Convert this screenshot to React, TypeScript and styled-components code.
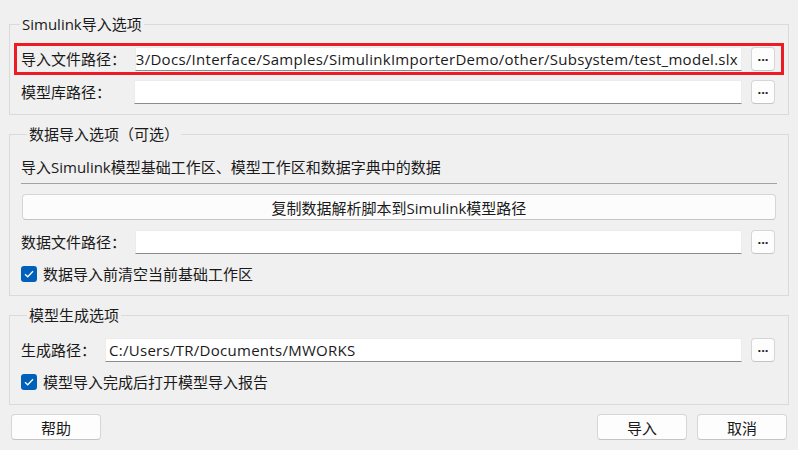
import React from "react";
import styled, { createGlobalStyle } from "styled-components";

const GlobalStyle = createGlobalStyle`
  html, body {
    margin: 0;
    padding: 0;
    background: #f0f0f0;
  }
  body {
    font-family: "Open Sans", "Noto Sans CJK SC", sans-serif;
    font-size: 15px;
    color: #1a1a1a;
  }
  * {
    box-sizing: border-box;
  }
`;

const Page = styled.div`
  width: 798px;
  height: 450px;
  padding: 14px 9px 0;
  display: flex;
  flex-direction: column;
  gap: 9px;
`;

const Group = styled.fieldset<{ $pad: string }>`
  margin: 0;
  min-width: 0;
  border: 1px solid #dadada;
  padding: ${(p) => p.$pad};
  display: flex;
  flex-direction: column;

  legend {
    margin-left: 6px;
    padding: 0 2px;
    line-height: 20px;
    font-size: 15px;
  }
`;

const Highlight = styled.div`
  border: 3px solid #ed1c24;
  padding: 1px 6px 1px 4px;
`;

const Row = styled.div<{ $indent?: string }>`
  display: flex;
  align-items: center;
  height: 24px;
  gap: 9px;
  margin: ${(p) => p.$indent || "0"};
`;

const Label = styled.span<{ $width: number }>`
  flex: 0 0 ${(p) => p.$width}px;
  white-space: nowrap;
  line-height: 20px;
`;

const Field = styled.div<{ $align?: "start" | "end" }>`
  flex: 1;
  height: 24px;
  min-width: 0;
  background: #ffffff;
  border: 1px solid #ececec;
  border-bottom-color: #8c8c8c;
  display: flex;
  align-items: center;
  justify-content: ${(p) => (p.$align === "start" ? "flex-start" : "flex-end")};
  overflow: hidden;
  white-space: nowrap;
  letter-spacing: 0.28px;
  padding: 0 3px;
`;

const Browse = styled.button`
  flex: 0 0 24px;
  height: 24px;
  padding: 0 0 6px;
  border: 1px solid #d6d6d6;
  border-bottom-color: #c4c4c4;
  border-radius: 4px;
  background: #fdfdfd;
  font-family: inherit;
  font-size: 13px;
  font-weight: 700;
  color: #1a1a1a;
  line-height: 1;
`;

const Description = styled.div`
  line-height: 20px;
  margin-top: 1px;
`;

const Separator = styled.div`
  height: 1px;
  background: #a3a3a3;
  margin: 6px 0 10px;
`;

const WideButton = styled.button`
  height: 26px;
  margin: 0 1px 10px;
  border: 1px solid #d6d6d6;
  border-bottom-color: #c4c4c4;
  border-radius: 4px;
  background: #fcfcfc;
  font-family: inherit;
  font-size: 15px;
  color: #1a1a1a;
`;

const CheckRow = styled.label`
  display: flex;
  align-items: center;
  gap: 6px;
  height: 20px;
  margin-top: 10px;
  line-height: 20px;
`;

const Box = styled.span`
  width: 16px;
  height: 16px;
  border-radius: 3px;
  background: #005fb8;
  display: flex;
  align-items: center;
  justify-content: center;
`;

const Footer = styled.div`
  display: flex;
  gap: 10px;
  margin: 0 2px;
`;

const Spacer = styled.div`
  flex: 1;
`;

const DialogButton = styled.button`
  width: 90px;
  height: 26px;
  border: 1px solid #d6d6d6;
  border-bottom-color: #c4c4c4;
  border-radius: 4px;
  background: #fdfdfd;
  font-family: inherit;
  font-size: 15px;
  color: #1a1a1a;
`;

const Check = ({ label }: { label: string }) => (
  <CheckRow>
    <Box>
      <svg width="10" height="8" viewBox="0 0 10 8">
        <path d="M1 4.2 L3.7 6.8 L9 1.2" fill="none" stroke="#fff" strokeWidth="1.3" />
      </svg>
    </Box>
    {label}
  </CheckRow>
);

const App: React.FC = () => {
  return (
    <>
      <GlobalStyle />
      <Page>
        <Group $pad="9px 4px 10px">
          <legend>Simulink导入选项</legend>
          <Highlight>
            <Row>
              <Label $width={104}>导入文件路径：</Label>
              <Field>3/Docs/Interface/Samples/SimulinkImporterDemo/other/Subsystem/test_model.slx</Field>
              <Browse>...</Browse>
            </Row>
          </Highlight>
          <Row $indent="5px 9px 0 7px">
            <Label $width={104}>模型库路径：</Label>
            <Field />
            <Browse>...</Browse>
          </Row>
        </Group>

        <Group $pad="12px 11px 11px">
          <legend>数据导入选项（可选）</legend>
          <Description>导入Simulink模型基础工作区、模型工作区和数据字典中的数据</Description>
          <Separator />
          <WideButton>复制数据解析脚本到Simulink模型路径</WideButton>
          <Row $indent="0 2px 0 0">
            <Label $width={104}>数据文件路径：</Label>
            <Field />
            <Browse>...</Browse>
          </Row>
          <Check label="数据导入前清空当前基础工作区" />
        </Group>

        <Group $pad="13px 11px 12px">
          <legend>模型生成选项</legend>
          <Row $indent="0 2px 0 0">
            <Label $width={74}>生成路径：</Label>
            <Field $align="start">C:/Users/TR/Documents/MWORKS</Field>
            <Browse>...</Browse>
          </Row>
          <Check label="模型导入完成后打开模型导入报告" />
        </Group>

        <Footer>
          <DialogButton>帮助</DialogButton>
          <Spacer />
          <DialogButton>导入</DialogButton>
          <DialogButton>取消</DialogButton>
        </Footer>
      </Page>
    </>
  );
};

export default App;
